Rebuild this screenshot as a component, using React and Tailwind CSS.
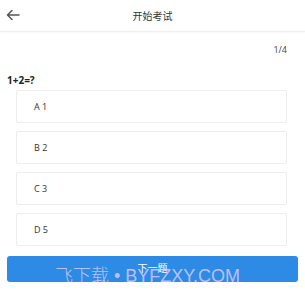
export default function App() {
  const options = ['A 1', 'B 2', 'C 3', 'D 5']
  return (
    <div className="relative h-[301px] w-[305px] overflow-hidden bg-white text-[#333]" style={{ fontFamily: '"Open Sans", "Noto Sans CJK SC", sans-serif' }}>
      <div className="relative flex h-[32px] items-center justify-center border-b border-[#f0f0f0] shadow-[0_1px_2px_rgba(0,0,0,0.03)]">
        <svg className="absolute left-[6px] top-[9px]" width="14" height="12" viewBox="0 0 14 12" fill="none" stroke="#555" strokeWidth="1.5" strokeLinecap="round" strokeLinejoin="round">
          <path d="M13 6H1.5M6 1.5L1.5 6L6 10.5" />
        </svg>
        <span className="text-[10px] leading-none text-[#333]" style={{ fontFamily: '"Noto Sans CJK SC", sans-serif' }}>开始考试</span>
      </div>

      <div className="flex justify-end pr-[18px] pt-[13px] text-[9px] leading-none text-[#444]">1/4</div>

      <div className="pl-[7px] pt-[21px] text-[10px] font-bold leading-none text-[#222]">1+2=?</div>

      <div className="mt-[5px] flex flex-col gap-[8px] pl-[16px] pr-[18px]">
        {options.map((o) => (
          <div key={o} className="flex h-[33px] items-center rounded-[2px] border border-[#ededed] pl-[17px] text-[9px] text-[#333]">
            {o}
          </div>
        ))}
      </div>

      <div className="relative mx-[7px] mt-[10px] flex h-[26px] justify-center overflow-hidden rounded-[3px] bg-[#2d8be6] pt-[7px]">
        <span className="text-[10px] leading-none text-white" style={{ fontFamily: '"Noto Sans CJK SC", sans-serif' }}>下一题</span>
        <span className="absolute left-[48px] top-[11px] whitespace-nowrap text-[18px] font-light leading-none text-[#ead2f5]/75" style={{ fontFamily: '"Liberation Sans", "Noto Sans CJK SC", sans-serif' }}>
          飞下载 • BYFZXY.COM
        </span>
      </div>
    </div>
  )
}
